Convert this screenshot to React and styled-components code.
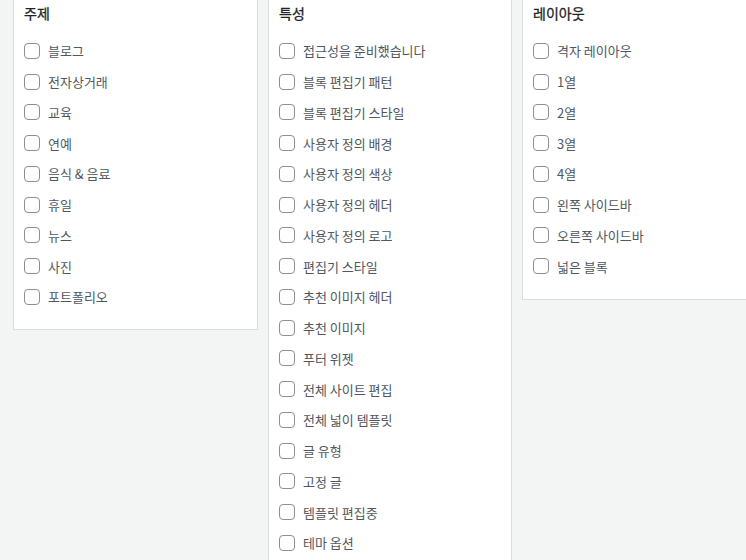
import React from "react";
import styled, { createGlobalStyle } from "styled-components";

const GlobalStyle = createGlobalStyle`
  html, body {
    margin: 0;
    padding: 0;
    background: #f3f4f4;
    overflow: hidden;
  }
  body {
    font-family: "Noto Sans CJK KR", "Noto Sans", "Liberation Sans", sans-serif;
  }
`;

const Columns = styled.div`
  display: grid;
  grid-template-columns: 245px 244px 245px;
  column-gap: 10px;
  align-items: start;
  padding-left: 13px;
`;

const Card = styled.section`
  background: #fff;
  border: 1px solid #dcdcde;
  border-top: none;
  padding: 3px 10px 17px;
`;

const Heading = styled.h3`
  margin: 0 0 12.5px;
  font-size: 14px;
  line-height: 20px;
  font-weight: 400;
  color: #1d2327;
  -webkit-text-stroke: 0.3px #1d2327;
`;

const List = styled.ul`
  list-style: none;
  margin: 0;
  padding: 0;
`;

const Row = styled.li`
  display: flex;
  align-items: center;
  gap: 8px;
  height: 30.75px;
  font-size: 13px;
  font-weight: 400;
  color: #50575e;
`;

const Box = styled.span`
  box-sizing: border-box;
  width: 16px;
  height: 16px;
  border: 1px solid #8c8f94;
  border-radius: 4px;
  background: #fff;
  flex: none;
`;

const groups = [
  {
    title: "주제",
    items: ["블로그", "전자상거래", "교육", "연예", "음식 & 음료", "휴일", "뉴스", "사진", "포트폴리오"],
  },
  {
    title: "특성",
    items: [
      "접근성을 준비했습니다",
      "블록 편집기 패턴",
      "블록 편집기 스타일",
      "사용자 정의 배경",
      "사용자 정의 색상",
      "사용자 정의 헤더",
      "사용자 정의 로고",
      "편집기 스타일",
      "추천 이미지 헤더",
      "추천 이미지",
      "푸터 위젯",
      "전체 사이트 편집",
      "전체 넓이 템플릿",
      "글 유형",
      "고정 글",
      "템플릿 편집중",
      "테마 옵션",
    ],
  },
  {
    title: "레이아웃",
    items: ["격자 레이아웃", "1열", "2열", "3열", "4열", "왼쪽 사이드바", "오른쪽 사이드바", "넓은 블록"],
  },
];

export default function App() {
  return (
    <>
      <GlobalStyle />
      <Columns>
        {groups.map((g) => (
          <Card key={g.title}>
            <Heading>{g.title}</Heading>
            <List>
              {g.items.map((item) => (
                <Row key={item}>
                  <Box />
                  {item}
                </Row>
              ))}
            </List>
          </Card>
        ))}
      </Columns>
    </>
  );
}
